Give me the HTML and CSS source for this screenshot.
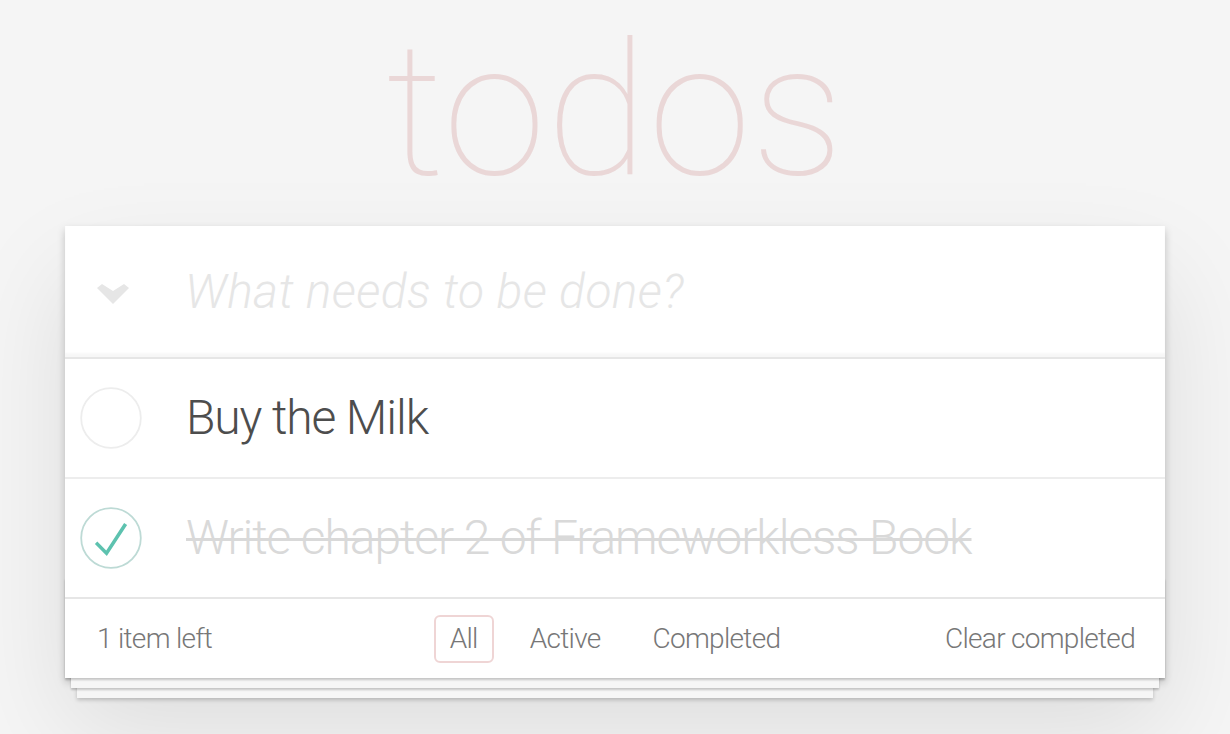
FILE: index.html
```html
<!DOCTYPE html>
<html lang="en">
<head>
<meta charset="utf-8">
<title>todos</title>
<link rel="stylesheet" href="styles.css">
</head>
<body>
<div class="page">
  <h1 class="title">todos</h1>
  <section class="todoapp">
    <header class="header">
      <span class="toggle-all" aria-hidden="true">
        <svg width="32" height="20" viewBox="0 0 32 20"><polygon points="0,4 5,0 16,7 27,0 32,4 16,20" fill="#e6e6e6"/></svg>
      </span>
      <input class="new-todo" type="text" placeholder="What needs to be done?">
    </header>
    <ul class="todo-list">
      <li class="todo">
        <span class="toggle">
          <svg width="62" height="62" viewBox="-2 -2 104 104"><circle cx="50" cy="50" r="50" fill="none" stroke="#ededed" stroke-width="3"/></svg>
        </span>
        <label class="todo-label">Buy the Milk</label>
      </li>
      <li class="todo completed">
        <span class="toggle">
          <svg width="62" height="62" viewBox="-2 -2 104 104"><circle cx="50" cy="50" r="50" fill="none" stroke="#bddad5" stroke-width="3"/><path fill="#5dc2af" d="M72 25L42 71 27 56l-4 4 20 20 34-52z"/></svg>
        </span>
        <label class="todo-label">Write chapter 2 of Frameworkless Book</label>
      </li>
    </ul>
    <footer class="footer">
      <span class="todo-count">1 item left</span>
      <ul class="filters">
        <li><a class="filter selected" href="#/">All</a></li>
        <li><a class="filter" href="#/active">Active</a></li>
        <li><a class="filter" href="#/completed">Completed</a></li>
      </ul>
      <button class="clear-completed">Clear completed</button>
    </footer>
  </section>
</div>
</body>
</html>
```
FILE: styles.css
```css
html, body {
  margin: 0;
  padding: 0;
}
body {
  background: #f5f5f5;
  font-family: Roboto, "Liberation Sans", sans-serif;
  font-weight: 300;
  color: #4d4d4d;
  -webkit-font-smoothing: antialiased;
}
.page {
  width: 1100px;
  margin: 0 auto;
  padding-bottom: 80px;
}
.title {
  margin: 0;
  height: 226px;
  padding: 0;
  font-size: 186px;
  font-weight: 100;
  line-height: 220px;
  letter-spacing: 0.5px;
  text-align: center;
  color: rgba(175, 47, 47, 0.15);
  box-sizing: border-box;
}
.todoapp {
  background: #fff;
  position: relative;
  box-shadow: 0 4px 8px 0 rgba(0, 0, 0, 0.2), 0 50px 100px 0 rgba(0, 0, 0, 0.1);
}
.header {
  display: flex;
  align-items: center;
  height: 131px;
  box-shadow: inset 0 -4px 2px rgba(0, 0, 0, 0.03);
}
.toggle-all {
  display: flex;
  width: 32px;
  height: 20px;
  margin-left: 32px;
  margin-top: 4px;
}
.new-todo {
  flex: 1;
  border: none;
  outline: none;
  background: transparent;
  padding: 0 0 0 56px;
  font-family: inherit;
  font-size: 48px;
  font-weight: 300;
  letter-spacing: 0.4px;
  color: #4d4d4d;
  height: 131px;
}
.new-todo::placeholder {
  font-style: italic;
  font-weight: 300;
  color: #e6e6e6;
}
.todo-list {
  list-style: none;
  margin: 0;
  padding: 0;
  border-top: 2px solid #e6e6e6;
}
.todo {
  display: flex;
  align-items: center;
  height: 118px;
  border-bottom: 2px solid #ededed;
}
.todo:last-child {
  border-bottom: none;
}
.toggle {
  display: flex;
  width: 62px;
  height: 62px;
  margin-left: 15px;
}
.todo-label {
  margin-left: 44px;
  font-size: 48px;
  line-height: 58px;
  letter-spacing: -1.1px;
  color: #4d4d4d;
}
.completed .todo-label {
  color: #d9d9d9;
  text-decoration: line-through;
  text-decoration-thickness: 3px;
}
.footer {
  display: grid;
  grid-template-columns: 1fr auto 1fr;
  align-items: center;
  height: 79px;
  padding: 0 30px;
  border-top: 2px solid #e6e6e6;
  color: #777;
  font-size: 28px;
  letter-spacing: -0.7px;
  position: relative;
}
.footer::before {
  content: "";
  position: absolute;
  left: 0;
  right: 0;
  bottom: 0;
  height: 100px;
  overflow: hidden;
  pointer-events: none;
  box-shadow: 0 2px 2px rgba(0, 0, 0, 0.2),
    0 16px 0 -6px #f6f6f6,
    0 18px 2px -6px rgba(0, 0, 0, 0.2),
    0 32px 0 -12px #f6f6f6,
    0 34px 4px -12px rgba(0, 0, 0, 0.2);
}
.todo-count {
  justify-self: start;
  padding-left: 2px;
}
.filters {
  list-style: none;
  margin: 0;
  padding: 0;
  display: flex;
  gap: 20px;
}
.filter {
  display: block;
  padding: 6px 14px;
  line-height: 32px;
  border: 2px solid transparent;
  border-radius: 6px;
  color: inherit;
  text-decoration: none;
}
.filter.selected {
  border-color: rgba(175, 47, 47, 0.2);
}
.clear-completed {
  justify-self: end;
  border: none;
  background: none;
  padding: 0;
  font-family: inherit;
  font-size: 28px;
  font-weight: 300;
  letter-spacing: -0.7px;
  color: #777;
}
```
